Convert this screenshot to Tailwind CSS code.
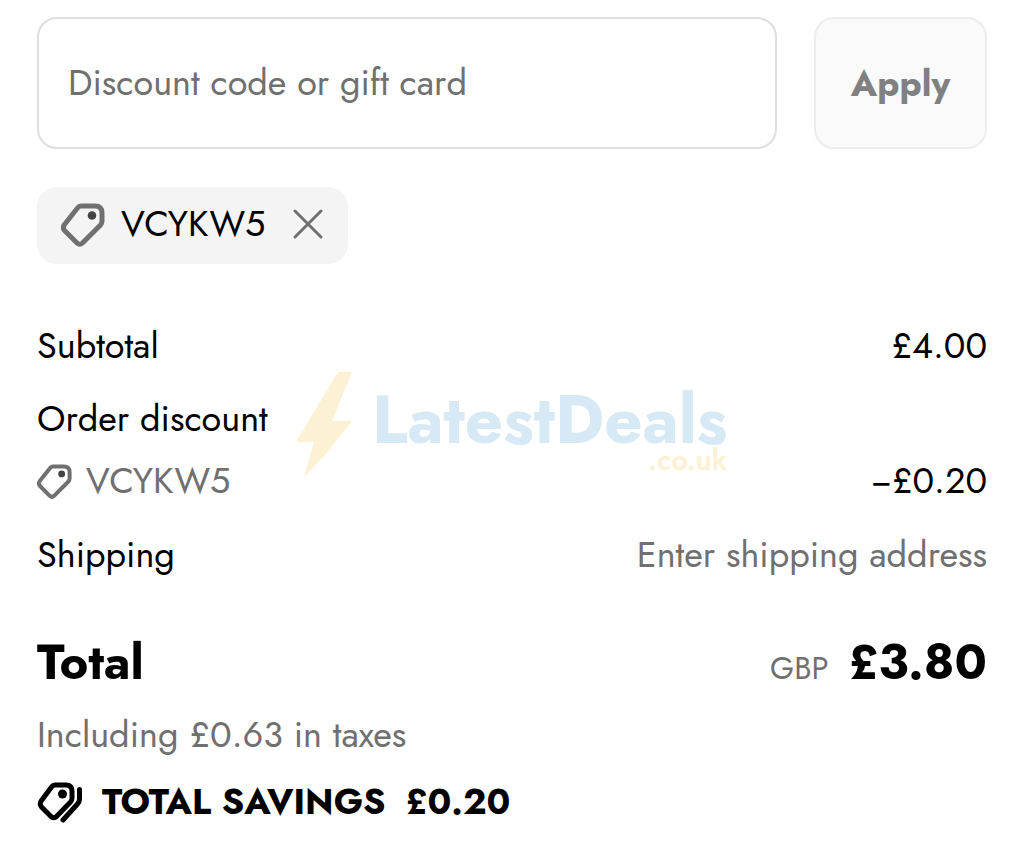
<!DOCTYPE html>
<html lang="en">
<head>
  <meta charset="UTF-8">
  <meta name="viewport" content="width=device-width, initial-scale=1.0">
  <title>Order summary</title>
  <script src="https://cdn.jsdelivr.net/npm/@tailwindcss/browser@4"></script>
</head>
<body class="bg-white font-['Jost','Lato',sans-serif] text-black">
  <!-- Shared tag icon -->
  <svg class="hidden">
    <symbol id="tag" viewBox="0 0 44 44">
      <path d="M20 3H34Q41 3 41 10V18Q41 20.500 39.500 22L21.500 40Q18.700 42.500 16 40L4 28Q1 25 3.500 21.500L16.500 5Q18 3 20 3Z" fill="none" stroke="currentColor" stroke-width="5" stroke-linejoin="round" />
      <circle cx="31" cy="12.500" r="4.300" fill="#444" />
    </symbol>
  </svg>

  <main class="relative px-[37px] pt-[17px] pb-7 text-4xl/12">
    <!-- Discount form -->
    <form class="flex gap-[37px]" onsubmit="return false">
      <label class="flex min-w-0 flex-1">
        <input type="text" aria-label="Discount code or gift card" placeholder="Discount code or gift card" class="h-[132px] w-full rounded-[20px] border-2 border-[#dedede] px-[29px] pb-[2px] placeholder:text-[#707070]">
      </label>
      <button type="submit" class="w-[173px] rounded-[20px] border-2 border-[#ededed] bg-[#fafafa] font-bold text-[#808080]">Apply</button>
    </form>

    <div class="mt-[38px] flex">
      <div class="flex h-[77px] items-start rounded-[20px] bg-[#f4f4f4] pt-3 pr-6 pl-6">
        <svg class="mt-1 size-11 text-[#707070]"><use href="#tag" /></svg>
        <span class="ml-4">VCYKW5</span>
        <button type="button" aria-label="Remove VCYKW5" class="mt-[9px] ml-[27px] text-[#707070]">
          <svg class="size-8" viewBox="0 0 32 32" fill="none" stroke="currentColor" stroke-width="3" stroke-linecap="round">
            <path d="M3 3L29 29M29 3L3 29" />
          </svg>
        </button>
      </div>
    </div>

    <!-- Cost lines -->
    <dl class="mt-[57px]">
      <div class="flex justify-between">
        <dt>Subtotal</dt>
        <dd>£4.00</dd>
      </div>
      <div class="mt-[25px]">
        <dt>Order discount</dt>
        <dd class="mt-[14px] flex justify-between">
          <span class="flex items-center text-[#707070]">
            <svg class="mt-[2px] mr-[14px] size-[35px]"><use href="#tag" /></svg>
            VCYKW5
          </span>
          <span>−£0.20</span>
        </dd>
      </div>
      <div class="mt-[26px] flex justify-between">
        <dt>Shipping</dt>
        <dd class="text-[#707070]">Enter shipping address</dd>
      </div>
      <div class="mt-[52px] flex items-baseline justify-between text-[49px]/16 font-bold">
        <dt>Total</dt>
        <dd><span class="mr-5 text-[31px]/9 font-normal text-[#707070]">GBP</span>£3.80</dd>
      </div>
    </dl>
    <p class="mt-4 text-[#707070]">Including £0.63 in taxes</p>
    <p class="mt-[19px] flex items-center font-bold">
      <svg class="mr-5 h-11 w-[45px]" viewBox="0 0 45 44" fill="none" stroke="currentColor" stroke-width="5" stroke-linecap="round" stroke-linejoin="round">
        <path d="M18 6H29Q35 6 35 12V19Q35 21.500 33.500 23L19.500 37.500Q17 40 14 37.500L4.500 28Q2 25 4.500 21.500L14.500 8Q16 6 18 6Z" />
        <path d="M42.500 10.500V20Q42.500 23 40.500 25L26 41" />
        <circle cx="25.500" cy="15" r="4.500" fill="currentColor" stroke="none" />
      </svg>
      <span>TOTAL SAVINGS</span>
      <span class="ml-5">£0.20</span>
    </p>

    <!-- Watermark -->
    <div class="pointer-events-none absolute top-[371px] left-[296px] flex" aria-hidden="true">
      <svg class="h-[106px] w-[56px]" viewBox="0 0 56 106">
        <path d="M42 1H56L36 50H56L29 84L8 106L18 71H0Z" fill="#fdf1d3" />
      </svg>
      <div class="ml-5 pt-[15px] text-right text-[#d6e9f4]">
        <div class="text-[67px]/17 font-bold">LatestDeals</div>
        <div class="text-[29px]/3 font-semibold text-[#fdf1d3]">.co.uk</div>
      </div>
    </div>
  </main>
</body>
</html>
